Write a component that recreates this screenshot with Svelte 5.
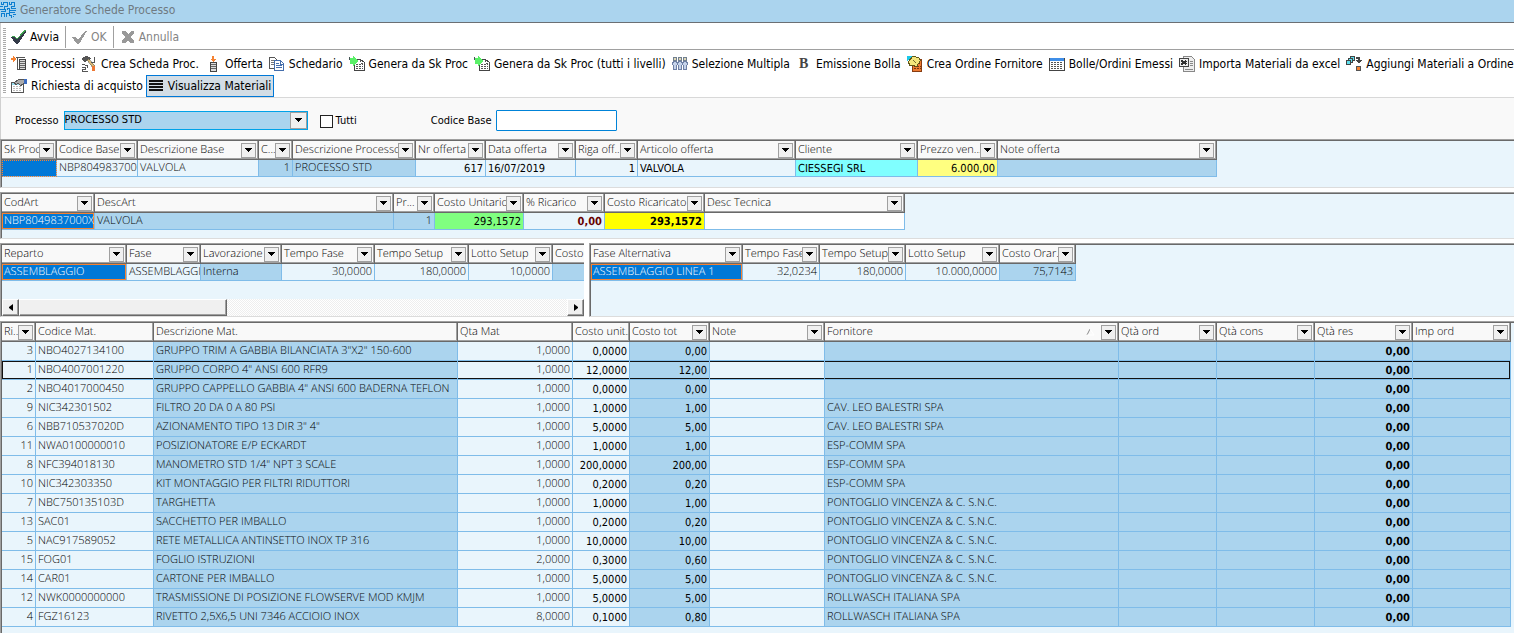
<script>
  const F = true;
  // column: [title, width, has filter, sortable mark]
  // cell: [text, style classes]
  const offerte = {
    cols: [['Sk Proc', 55, F], ['Codice Base', 81, F], ['Descrizione Base', 121, F], ['C...', 34, F], ['Descrizione Processo', 123, F], ['Nr offerta', 70, F], ['Data offerta', 90, F], ['Riga off...', 62, F], ['Articolo offerta', 158, F], ['Cliente', 122, F], ['Prezzo ven...', 80, F], ['Note offerta', 219, F]],
    rows: [[['', 'sel dotted'], ['NBP8049837000X', ''], ['VALVOLA', ''], ['1', 'blue num'], ['PROCESSO STD', 'blue'], ['617', 'num tah'], ['16/07/2019', 'tah'], ['1', 'num tah'], ['VALVOLA', 'tah'], ['CIESSEGI SRL', 'cyan tah'], ['6.000,00', 'pale num tah'], ['', 'blue']]]
  };
  const articoli = {
    cols: [['CodArt', 93, F], ['DescArt', 299, F], ['Pr...', 41, F], ['Costo Unitario', 89, F], ['% Ricarico', 81, F], ['Costo Ricaricato', 100, F], ['Desc Tecnica', 200, F]],
    rows: [[['NBP8049837000X', 'sel'], ['VALVOLA', 'blue'], ['1', 'blue num'], ['293,1572', 'green num tah'], ['0,00', 'num bold maroon'], ['293,1572', 'yellow num bold'], ['', 'white']]]
  };
  const fasi = {
    cols: [['Reparto', 125, F], ['Fase', 74, F], ['Lavorazione', 81, F], ['Tempo Fase', 93, F], ['Tempo Setup', 94, F], ['Lotto Setup', 84, F], ['Costo', 80, F]],
    rows: [[['ASSEMBLAGGIO', 'sel'], ['ASSEMBLAGGIO', ''], ['Interna', 'blue'], ['30,0000', 'num'], ['180,0000', 'num'], ['10,0000', 'num'], ['', 'blue']]]
  };
  const alternative = {
    cols: [['Fase Alternativa', 152, F], ['Tempo Fase', 77, F], ['Tempo Setup', 86, F], ['Lotto Setup', 94, F], ['Costo Orar...', 76, F]],
    rows: [[['ASSEMBLAGGIO LINEA 1', 'sel'], ['32,0234', 'num'], ['180,0000', 'num'], ['10.000,0000', 'num'], ['75,7143', 'blue num']]]
  };
  const righe = [
    ['3', 'NBO4027134100', 'GRUPPO TRIM A GABBIA BILANCIATA 3"X2" 150-600', '1,0000', '0,0000', '0,00', ''],
    ['1', 'NBO4007001220', 'GRUPPO CORPO 4" ANSI 600 RFR9', '1,0000', '12,0000', '12,00', ''],
    ['2', 'NBO4017000450', 'GRUPPO CAPPELLO GABBIA 4" ANSI 600 BADERNA TEFLON', '1,0000', '0,0000', '0,00', ''],
    ['9', 'NIC342301502', 'FILTRO 20 DA 0 A 80 PSI', '1,0000', '1,0000', '1,00', 'CAV. LEO BALESTRI SPA'],
    ['6', 'NBB710537020D', 'AZIONAMENTO TIPO 13 DIR 3" 4"', '1,0000', '5,0000', '5,00', 'CAV. LEO BALESTRI SPA'],
    ['11', 'NWA0100000010', 'POSIZIONATORE E/P ECKARDT', '1,0000', '1,0000', '1,00', 'ESP-COMM SPA'],
    ['8', 'NFC394018130', 'MANOMETRO STD 1/4" NPT 3 SCALE', '1,0000', '200,0000', '200,00', 'ESP-COMM SPA'],
    ['10', 'NIC342303350', 'KIT MONTAGGIO PER FILTRI RIDUTTORI', '1,0000', '0,2000', '0,20', 'ESP-COMM SPA'],
    ['7', 'NBC750135103D', 'TARGHETTA', '1,0000', '1,0000', '1,00', 'PONTOGLIO VINCENZA & C. S.N.C.'],
    ['13', 'SAC01', 'SACCHETTO PER IMBALLO', '1,0000', '0,2000', '0,20', 'PONTOGLIO VINCENZA & C. S.N.C.'],
    ['5', 'NAC917589052', 'RETE METALLICA ANTINSETTO INOX TP 316', '1,0000', '10,0000', '10,00', 'PONTOGLIO VINCENZA & C. S.N.C.'],
    ['15', 'FOG01', 'FOGLIO ISTRUZIONI', '2,0000', '0,3000', '0,60', 'PONTOGLIO VINCENZA & C. S.N.C.'],
    ['14', 'CAR01', 'CARTONE PER IMBALLO', '1,0000', '5,0000', '5,00', 'PONTOGLIO VINCENZA & C. S.N.C.'],
    ['12', 'NWK0000000000', 'TRASMISSIONE DI POSIZIONE FLOWSERVE MOD KMJM', '1,0000', '5,0000', '5,00', 'ROLLWASCH ITALIANA SPA'],
    ['4', 'FGZ16123', 'RIVETTO 2,5X6,5 UNI 7346 ACCIOIO INOX', '8,0000', '0,1000', '0,80', 'ROLLWASCH ITALIANA SPA']
  ];
  const materiali = {
    current: 1,
    cols: [['Ri...', 34, F], ['Codice Mat.', 118], ['Descrizione Mat.', 304], ['Qta Mat', 115], ['Costo unit...', 57], ['Costo tot', 80, F], ['Note', 115, F], ['Fornitore', 294, F, true], ['Qtà ord', 98, F], ['Qtà cons', 98, F], ['Qtà res', 98, F], ['Imp ord', 98, F]],
    rows: righe.map(([n, cod, desc, qta, unit, tot, forn]) => [
      [n, 'num'], [cod, ''], [desc, 'blue'], [qta, 'num'], [unit, 'num tah'], [tot, 'blue num tah'], ['', ''],
      [forn, 'blue'], ['', 'blue'], ['', 'blue'], ['0,00', 'blue num bold'], ['', 'blue']
    ])
  };
  const azioni = [
    ['processi', 'Processi'], ['crea', 'Crea Scheda Proc.'], ['offerta', 'Offerta'], ['schedario', 'Schedario'],
    ['genera', 'Genera da Sk Proc'], ['genera', 'Genera da Sk Proc (tutti i livelli)'], ['persone', 'Selezione Multipla'],
    ['bolla', 'Emissione Bolla'], ['ordine', 'Crea Ordine Fornitore'], ['tabella', 'Bolle/Ordini Emessi'],
    ['excel', 'Importa Materiali da excel'], ['aggiungi', 'Aggiungi Materiali a Ordine']
  ];
</script>

{#snippet icon(name)}
  <svg class="icon" width="16" height="16" viewBox="0 0 16 16" aria-hidden="true">
    {#if name === 'check'}
      <path d="M1 7h3l2 3L13 1h2L7 14H5z" fill="#3ba14b" /><path d="M0 8h4l2 3L14 2l1 1L7 15H5z" fill="#333a48" />
    {:else if name === 'ok'}
      <path d="M0 8h4l2 3L13 2h2L7 15H5z" fill="#999" />
    {:else if name === 'cross'}
      <path d="M2 2h4l2 3 3-3h3v2l-3 4 3 4v2h-4l-2-3-3 3H2v-2l3-4-3-4z" fill="#999" />
    {:else if name === 'processi'}
      <path d="M0 2h2V0l3 3-3 3V4H0z" fill="#f58232" /><path d="M5 1.500h9M6.500 2v11.500H9" stroke="#555" fill="none" />
      <path d="M8.500 3.500h6v10h-6z" fill="#ddd" stroke="#444" /><path d="M9 5.500h5M9 7.500h5M9 9.500h5M9 11.500h5" stroke="#666" />
    {:else if name === 'crea'}
      <path d="M2 1l4-1 4 2-2 2-2 0-2 2-3-2z" fill="#555" /><path d="M6 4l2-1 6 7-2 2z" fill="#d8b878" stroke="#554" stroke-width=".5" />
      <path d="M13.500 1v5l-3 1M1 8.500h3M1 11.500h3v2H1.500v2H7M6 9v3M4 9.500h2" stroke="#555" fill="none" /><path d="M11 10h3v5h-3z" fill="#ee7733" />
    {:else if name === 'offerta'}
      <path d="M7 0h2v3h2L8 6 5 3h2z" fill="#f58232" /><path d="M5.500 6.500h6v9h-6z" fill="#ddd" stroke="#444" /><path d="M6 8.500h5M6 10.500h5M6 12.500h5" stroke="#666" />
    {:else if name === 'schedario'}
      <path d="M.5 1.500h5l3 3v8h-8z" fill="#fff" stroke="#555" /><path d="M2 4.500h3M2 6.500h4M2 8.500h4" stroke="#777" />
      <path d="M5.500 4.500h6l3 3v7h-9z" fill="#fff" stroke="#456eac" /><path d="M11.500 5v3h3M7 7.500h3M7 9.500h6M7 11.500h6" stroke="#456eac" fill="none" />
    {:else if name === 'genera'}
      <path d="M5.500 3.500h6l4 3v8h-10z" fill="#fff" stroke="#444" /><path d="M11.500 4v3h4M7 8.500h7M7 10.500h7M7 12.500h7" stroke="#555" fill="none" stroke-dasharray="2 1" />
      <path d="M1 2h3V0l5 5-5 5V8H1z" fill="#5af068" /><path d="M.5 1v3" stroke="#455" fill="none" />
    {:else if name === 'persone'}
      {#each [0, 5, 10] as x}
        <circle cx={x + 3} cy="3" r="2" fill="#e0d8b8" stroke="#71808f" /><path d="M{x + 1.5} 5.500h3l1 2-1 3v3h-3v-3l-1-3z" fill="#c4d2ea" stroke="#6d80a6" />
      {/each}
    {:else if name === 'bolla'}
      <text x="3" y="12" font-family="Liberation Serif, serif" font-weight="700" font-size="14" fill="#444">B</text>
    {:else if name === 'ordine'}
      <path d="M0 0h5L0 5z" fill="#1bc8e8" /><path d="M5.500 3.500h9v12h-9z" fill="#ed7a31" stroke="#873d12" /><path d="M7 10.500h7M7 12.500h7M12.500 4v4" stroke="#713716" stroke-dasharray="2 1" />
      <path d="M1.500 5.500l4-5 6 1 2 3-4 6-3-1h-4z" fill="#f4e67c" stroke="#615719" /><path d="M6 4l3 3" stroke="#776b2d" />
    {:else if name === 'tabella'}
      <path d="M.5 2.500h15v12H.5z" fill="#fff" stroke="#444" /><path d="M1 2h14v3H1z" fill="#3f8ee8" />
      <path d="M2 6.500h12M2 8.500h12M2 10.500h12M2 12.500h12" stroke="#555" stroke-dasharray="2 1" />
    {:else if name === 'excel'}
      <path d="M4.500.500h8l3 3v12h-11z" fill="#eee" stroke="#888" /><path d="M11 5.500h3M11 7.500h3M11 9.500h3M6 13.500h8" stroke="#888" />
      <path d="M.5 2.500h9v8h-9z" fill="#eee" stroke="#444" /><path d="M2.500 4.500l5 4M7.500 4.500l-5 4" stroke="#333" stroke-width="2" />
    {:else if name === 'aggiungi'}
      <path d="M4.500.500h4v4h-4z" fill="#5ee0ee" stroke="#444" /><path d="M2.500 2.500h4v4h-4z" fill="#5ee0ee" stroke="#444" /><path d="M.5 4.500h4v4h-4z" fill="#5ee0ee" stroke="#444" />
      <path d="M10 1h4v3h2l-3 4-3-4h2V3h-2z" fill="#444" /><path d="M10.500 10.500h4v4h-4z" fill="#f58232" stroke="#555" />
    {:else if name === 'richiesta'}
      <path d="M.5 4.500h12v10H.5z" fill="#fff" stroke="#555" /><path d="M1 5h11v2H1z" fill="#9de" /><path d="M2 8.500h9M2 10.500h9M2 12.500h9" stroke="#bbb" stroke-dasharray="2 1" />
      <path d="M3.500 4.500l4-3h6v4l-4 2-2-2-3 1z" fill="#aaa" stroke="#555" /><path d="M13 1h3v5h-3z" fill="#3c6cc0" />
    {/if}
  </svg>
{/snippet}

{#snippet arrow()}
  <svg width="7" height="4" viewBox="0 0 7 4" aria-hidden="true"><path d="M0 0h7v1H6v1H5v1H4v1H3V3H2V2H1V1H0z" fill="#000" /></svg>
{/snippet}

{#snippet grid(g, cls)}
  <table class={cls} style:width="{g.cols.reduce((s, c) => s + c[1], 0)}px">
    <colgroup>{#each g.cols as c}<col style:width="{c[1]}px" />{/each}</colgroup>
    <thead>
      <tr>
        {#each g.cols as c}
          <th scope="col">
            <div class="head">
              <span class="title">{c[0]}</span>
              {#if c[3]}<svg class="sort" width="9" height="7" viewBox="0 0 9 7" aria-hidden="true"><path d="M4 0L1 6" stroke="#888" fill="none" /><path d="M4 0l4 6H1" stroke="#fff" fill="none" /></svg>{/if}
              {#if c[2]}<button class="filter" aria-label="Filtra {c[0]}">{@render arrow()}</button>{/if}
            </div>
          </th>
        {/each}
      </tr>
    </thead>
    <tbody>
      {#each g.rows as r, i}
        <tr class:current={g.current === i}>
          {#each r as cell}<td class={cell[1]}>{cell[0]}</td>{/each}
        </tr>
      {/each}
    </tbody>
  </table>
{/snippet}

<div class="window">
  <header class="titlebar">
    <svg width="16" height="16" viewBox="0 0 16 16" aria-hidden="true" shape-rendering="crispEdges">
      <path d="M1.500 0v2.500h2V.500h4v4h-3v3H0M9.500 0v2.500h2V.500h3v4h-3v2H16M7.500 8V6.500h2v4h5M.5 9.500h5V7M1.500 15v-3.500h3V15M6.500 15v-4h3v2.500h2V16M13 12.500h3M13.500 15v-1M0 4.500h3M9 8.500h7" fill="none" stroke="#0d7ed0" />
    </svg>
    <span>Generatore Schede Processo</span>
  </header>

  <div class="toolbar">
    <div class="grip"></div>
    <div class="bars">
      <div class="bar first">
        <button class="tool">{@render icon('check')}Avvia</button>
        <button class="tool off" disabled>{@render icon('ok')}OK</button>
        <button class="tool off" disabled>{@render icon('cross')}Annulla</button>
      </div>
      <div class="bar">
        {#each azioni as a}<button class="tool">{@render icon(a[0])}{a[1]}</button>{/each}
      </div>
      <div class="bar">
        <button class="tool">{@render icon('richiesta')}Richiesta di acquisto</button>
        <button class="tool pressed" aria-pressed="true">
          <svg width="14" height="12" viewBox="0 0 14 12" aria-hidden="true"><path d="M0 1h14M0 4h14M0 7h14M0 10h14" stroke="#111" stroke-width="2" shape-rendering="crispEdges" /></svg>
          Visualizza Materiali
        </button>
      </div>
    </div>
  </div>

  <form class="filters">
    <label for="processo">Processo</label>
    <div class="combo">
      <select id="processo"><option>PROCESSO STD</option></select>
      <span class="drop">{@render arrow()}</span>
    </div>
    <label class="tick"><input type="checkbox" />Tutti</label>
    <label for="codice">Codice Base</label>
    <input id="codice" class="text" type="text" />
  </form>

  <section class="pane offers">{@render grid(offerte, '')}</section>
  <section class="pane">{@render grid(articoli, '')}</section>
  <div class="split">
    <section class="pane">
      {@render grid(fasi, '')}
      <div class="scroll">
        <button aria-label="Scorri a sinistra"><svg width="4" height="7" viewBox="0 0 4 7"><path d="M4 0v7L0 4V3z" /></svg></button>
        <div class="track"><div class="thumb"></div></div>
        <button aria-label="Scorri a destra"><svg width="4" height="7" viewBox="0 0 4 7"><path d="M0 0v7l4-3V3z" /></svg></button>
      </div>
    </section>
    <section class="pane">{@render grid(alternative, '')}</section>
  </div>
  <section class="pane last">{@render grid(materiali, 'tall')}</section>
</div>

<style>
  :global(body) { background: #fff; }
  .window {
    min-height: 100vh; display: flex; flex-direction: column; overflow: hidden;
    font: 11px/14px "DejaVu Sans Condensed", "DejaVu Sans", sans-serif; color: #000;
  }
  button, select, input { font: inherit; color: inherit; margin: 0; padding: 0; border: 0; border-radius: 0; background: none; }

  .titlebar {
    display: flex; align-items: center; gap: 4px; height: 20px; padding-bottom: 2px;
    background: #abd4ee; border-bottom: 1px solid #6b6f73; color: #6f7a82;
    font-size: 12px;
  }

  .toolbar { display: flex; gap: 2px; padding: 1px 0 0 2px; background: #fff; border-bottom: 1px solid #d8d8d8; border-left: 1px solid #d0d0d0; }
  .grip { width: 3px; flex: none; margin: 4px 0; background: repeating-linear-gradient(#aaa 0 1px, #fff 1px 2px); }
  .bars { flex: 1; min-width: 0; }
  .bar { display: flex; gap: 6px; height: 22px; align-items: center; padding-left: 3px; }
  .bar.first { height: 24px; padding-top: 1px; margin-bottom: 3px; gap: 0; border-bottom: 1px solid #a0a0a0; }
  .tool { display: flex; flex: none; align-items: center; gap: 4px; font-size: 12px; white-space: nowrap; }
  .icon { flex: none; shape-rendering: crispEdges; }
  .first .tool { height: 22px; padding-right: 6px; gap: 3px; }
  .first .tool + .tool { border-left: 1px solid #a0a0a0; padding-left: 6px; }
  .tool.off { color: #838383; }
  .tool.pressed { height: 22px; box-sizing: border-box; border: 1px solid #0078d7; background: #d3dde5; padding: 0 2px; gap: 5px; margin-left: -3px; }

  .filters { display: flex; align-items: center; box-sizing: border-box; height: 41px; padding: 3px 0 0 14px; background: #f9f9f9; border-left: 1px solid #d0d0d0; }
  .filters > label { padding-top: 2px; }
  .combo { display: grid; width: 244px; height: 19px; margin: 0 12px 0 5px; box-sizing: border-box; border: 1px solid #00a2e8; background: #abd4ee; }
  .combo select { grid-area: 1/1; appearance: none; outline: 0; }
  .drop { grid-area: 1/1; justify-self: end; width: 15px; display: grid; place-items: center; background: #f0f0f0; border: 1px solid #a0a0a0; pointer-events: none; }
  .tick { display: flex; align-items: center; gap: 3px; margin-right: 74px; }
  .tick input { appearance: none; width: 13px; height: 13px; border: 1px solid #222; background: #fff; box-sizing: border-box; }
  .text { box-sizing: border-box; width: 121px; height: 21px; margin-left: 4px; border: 1px solid #0083d8; border-radius: 1px; background: #fff; }

  .pane {
    min-width: 0; overflow: hidden; min-height: 44px; background: #e9f5fc;
    border-top: 1px solid #a0a0a0; border-left: 1px solid #a0a0a0; border-bottom: 1px solid #dcdcdc;
    box-shadow: inset 1px 1px #696969; padding: 1px 0 0 1px; margin-bottom: 4px;
  }
  .pane.offers { min-height: 46px; }
  .pane.last { flex: 1; margin-bottom: 0; border-bottom: 0; }
  .split { display: grid; grid-template-columns: 584fr 925fr; gap: 5px; margin-bottom: 4px; }
  .split .pane { margin: 0; display: flex; flex-direction: column; height: 71px; }

  table { flex: none; table-layout: fixed; border-collapse: separate; border-spacing: 0; font-family: "Open Sans", sans-serif; text-rendering: geometricPrecision; }
  th, td { box-sizing: border-box; padding: 0; overflow: hidden; white-space: nowrap; text-align: left; font-weight: 300; }
  th { height: 19px; background: #f9f9f9; border-right: 1px solid #696969; border-bottom: 1px solid #696969; box-shadow: inset -1px -1px #a0a0a0; }
  .head { display: flex; align-items: center; height: 18px; padding: 0 2px; }
  .title { flex: 1; min-width: 0; }
  .filter { flex: none; width: 15px; height: 15px; display: grid; place-items: center; background: #f0f0f0; border: 1px solid #a0a0a0; }
  .sort { margin-right: 6px; }
  td { height: 17px; padding: 0 2px; border-right: 1px solid #7fbce9; border-bottom: 1px solid #7fbce9; color: #000; background: #e9f5fc; }
  .tall td { height: 19px; }
  td.num { text-align: right; }
  td.blue { background: #abd4ee; }
  td.white { background: #fff; }
  td.cyan { background: #80ffff; }
  td.pale { background: #ffff80; }
  td.green { background: #80ff80; }
  td.yellow { background: #ff0; }
  td.tah, td.bold { font-family: "DejaVu Sans Condensed", "DejaVu Sans", sans-serif; color: #000; font-weight: 400; padding-top: 1px; }
  td.bold { font-weight: 700; padding-top: 2px; }
  td.maroon { color: #600; }
  td.sel { background: #0078d7; color: #fff; box-shadow: inset 0 0 0 1px #f58232; }
  td.dotted { box-shadow: none; outline: 1px dotted #f58232; outline-offset: -1px; }
  .current td { box-shadow: inset 0 1px #111, inset 0 -1px #111; }
  .current td:first-child { box-shadow: inset 0 1px #111, inset 0 -1px #111, inset 1px 0 #111; }
  .current td:last-child { box-shadow: inset 0 1px #111, inset 0 -1px #111, inset -1px 0 #111; }

  .scroll { display: flex; height: 17px; margin-top: auto; }
  .scroll button { width: 17px; display: grid; place-items: center; }
  .scroll button, .thumb { background: #f0f0f0; box-sizing: border-box; border: 1px solid #fff; border-right-color: #696969; border-bottom-color: #696969; box-shadow: inset -1px -1px #a0a0a0; }
  .track { flex: 1; background: repeating-conic-gradient(#fff 0 25%, #eee 0 50%) 0 0/2px 2px; }
  .thumb { width: 38%; height: 17px; }
</style>
